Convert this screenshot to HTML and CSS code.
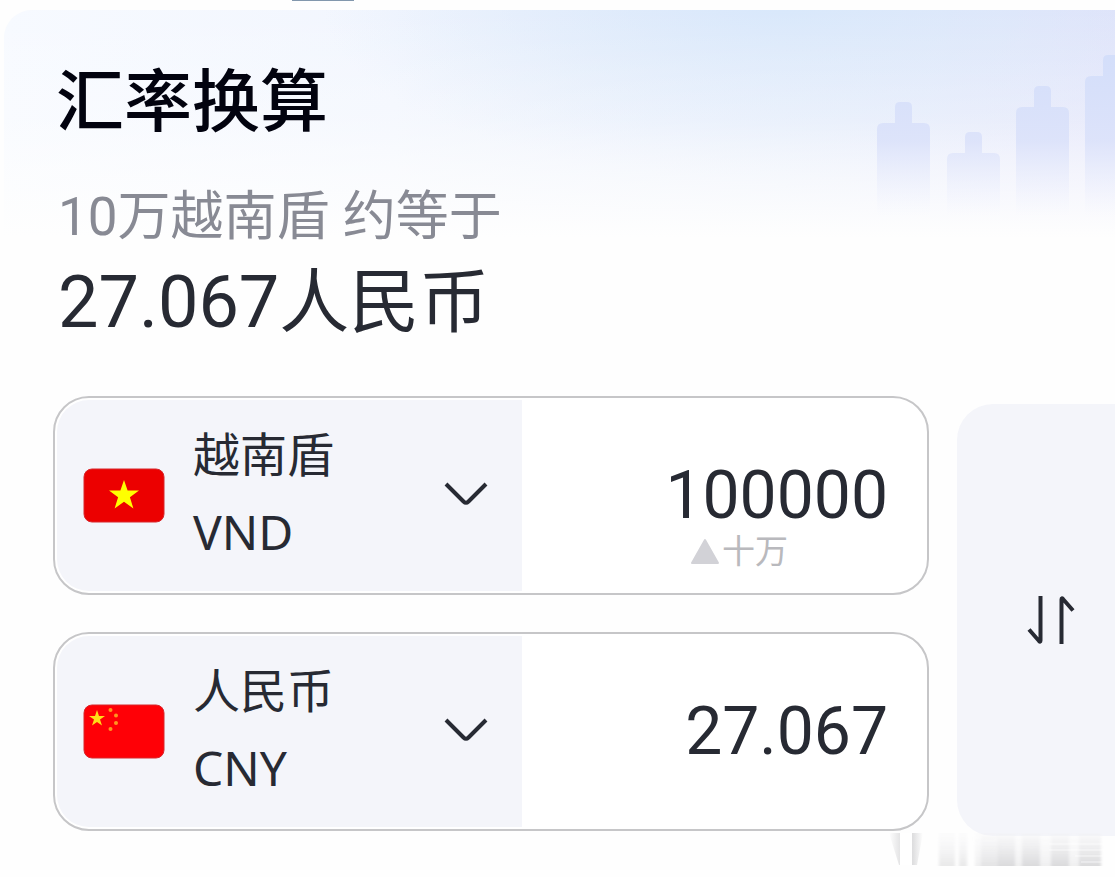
FILE: index.html
```html
<!DOCTYPE html>
<html lang="zh-CN">
<head>
<meta charset="utf-8">
<meta name="viewport" content="width=device-width, initial-scale=1">
<title>汇率换算</title>
<link rel="stylesheet" href="styles.css">
</head>
<body>
<div class="tab-strip"><span class="tab-marker"></span></div>
<main class="card">
  <svg class="candles" width="240" height="220" viewBox="0 0 240 220" aria-hidden="true">
    <defs>
      <linearGradient id="fade" gradientUnits="userSpaceOnUse" x1="0" y1="40" x2="0" y2="206">
        <stop offset="0" stop-color="#d3defa"/>
        <stop offset="0.55" stop-color="#dae1fa" stop-opacity="0.85"/>
        <stop offset="1" stop-color="#eceffd" stop-opacity="0"/>
      </linearGradient>
    </defs>
    <g fill="url(#fade)">
      <path d="M2 210V119q0-6 6-6h12V97q0-5 5-5h7q5 0 5 5v16h12q6 0 6 6v91z"/>
      <path d="M72 210V149q0-6 6-6h12v-16q0-5 5-5h7q5 0 5 5v16h12q6 0 6 6v61z"/>
      <path d="M141 210V103q0-6 6-6h12V81q0-5 5-5h7q5 0 5 5v16h12q6 0 6 6v107z"/>
      <path d="M210 210V72q0-6 6-6h12V50q0-5 5-5h7v165z"/>
    </g>
  </svg>
  <h1 class="title">汇率换算</h1>
  <p class="summary">10万越南盾 约等于</p>
  <p class="result"><span class="figure">27.067</span>人民币</p>

  <form class="converter">
    <div class="rows">
      <div class="row">
        <button class="currency" type="button" aria-haspopup="listbox" aria-label="越南盾 VND">
          <svg class="flag" width="82" height="55" viewBox="0 0 82 55" aria-hidden="true">
            <rect x="1" y="1" width="80" height="53" rx="8" fill="#ec0000" stroke="#d8262b"/>
            <path fill="#ffff00" d="M41 12l3.600 10.500h11.400l-9.100 6.700 3.500 11.300-9.400-6.800-9.400 6.800 3.500-11.300-9.100-6.700h11.400z"/>
          </svg>
          <span class="names"><span class="name">越南盾</span><span class="code">VND</span></span>
          <svg class="chevron" width="44" height="24" viewBox="0 0 44 24" aria-hidden="true"><path d="M2 2l17.500 17.500q2.500 2.500 5 0L42 2"/></svg>
        </button>
        <div class="field">
          <input class="amount" type="text" inputmode="decimal" value="100000" aria-label="越南盾金额">
          <span class="hint"><svg width="30" height="27" viewBox="0 0 30 27" aria-hidden="true"><path d="M15 2L28 25H2z" fill="#d2d2d7" stroke="#d2d2d7" stroke-width="2" stroke-linejoin="round"/></svg>十万</span>
        </div>
      </div>
      <div class="row">
        <button class="currency" type="button" aria-haspopup="listbox" aria-label="人民币 CNY">
          <svg class="flag" width="82" height="55" viewBox="0 0 82 55" aria-hidden="true">
            <rect x="1" y="1" width="80" height="53" rx="8" fill="#ff0006" stroke="#d8262b"/>
            <path fill="#ffde17" d="M14 6l2 6h6l-5 3.600 2 6-5-3.600-5 3.600 2-6L6 12h6z"/>
            <g fill="#ff951f"><circle cx="27.500" cy="6" r="2"/><circle cx="33" cy="11.500" r="2"/><circle cx="33" cy="19" r="2"/><circle cx="27.500" cy="25" r="2"/></g>
          </svg>
          <span class="names"><span class="name">人民币</span><span class="code">CNY</span></span>
          <svg class="chevron" width="44" height="24" viewBox="0 0 44 24" aria-hidden="true"><path d="M2 2l17.500 17.500q2.500 2.500 5 0L42 2"/></svg>
        </button>
        <div class="field">
          <input class="amount" type="text" inputmode="decimal" value="27.067" aria-label="人民币金额">
        </div>
      </div>
    </div>
    <button class="swap" type="button" aria-label="互换货币">
      <svg width="48" height="50" viewBox="0 0 48 50" aria-hidden="true"><path d="M13.500 1v44.500q0 2-1.500.5L2 34.500M34.500 49V4.500q0-2 1.500-.5L46 15.500"/></svg>
    </button>
  </form>
</main>
<svg class="stamp" width="226" height="40" viewBox="0 0 226 40" aria-hidden="true">
  <defs>
    <linearGradient id="veil" x1="0" y1="0" x2="0" y2="1">
      <stop offset="0" stop-color="#f2f2f4" stop-opacity="0.300"/>
      <stop offset="1" stop-color="#dadadc"/>
    </linearGradient>
    <linearGradient id="side" x1="0" y1="0" x2="1" y2="0">
      <stop offset="0" stop-color="#d0d0d2" stop-opacity="0"/>
      <stop offset="0.400" stop-color="#d0d0d2"/>
      <stop offset="0.700" stop-color="#d0d0d2"/>
      <stop offset="1" stop-color="#d0d0d2" stop-opacity="0"/>
    </linearGradient>
    <filter id="soft"><feGaussianBlur stdDeviation="1.500 0.500"/></filter>
  </defs>
  <path d="M0 2h34l-6 32H10z" fill="url(#side)" opacity="0.700"/>
  <g fill="url(#veil)" filter="url(#soft)">
    <path d="M50 2h16v33H50zM70 2h8v33h-8zM92 2h18v33H92z" opacity="0.600"/>
    <path d="M109 2h17v33h-17zM133 2h18v33h-18zM162 2h18v33h-18zM190 2h22v33h-22z"/>
    <path d="M86 2h126v33H86z" opacity="0.400"/>
  </g>
  <path d="M11 2h12v32H11z" fill="#fff"/>
  <path d="M160 13h54M160 19h54M186 25h28M192 31h22" stroke="#fff" stroke-width="1" opacity="0.700"/>
</svg>
</body>
</html>
```
FILE: styles.css
```css
* {
  box-sizing: border-box;
}

body {
  position: relative;
  margin: 0;
  min-height: 100vh;
  overflow: hidden;
  background: #fefefe;
  color: #272a33;
  font-family: Roboto, "Noto Sans CJK SC", sans-serif;
}

button,
input {
  margin: 0;
  border: 0;
  color: inherit;
  font-family: inherit;
}

.tab-strip {
  height: 10px;
  padding-left: 292px;
}

.tab-marker {
  display: block;
  width: 62px;
  height: 1px;
  background: #8297ad;
}

.card {
  position: relative;
  margin-left: 4px;
  padding: 53px 0 40px 52px;
  border-radius: 28px 0 0 0;
  background:
    linear-gradient(180deg, transparent 0, rgba(254, 254, 254, 0.3) 110px, rgba(254, 254, 254, 0.6) 155px, #fefefe 228px),
    radial-gradient(460px 170px at 780px 0, #d9e8fb, transparent),
    linear-gradient(90deg, #f7faff 0, #f2f6fe 35%, #e6edfb 70%, #e1e3fa 100%);
}

.candles {
  position: absolute;
  top: 0;
  right: 0;
}

.title {
  position: relative;
  margin: 0;
  color: #02030f;
  font-size: 68px;
  font-weight: 500;
  line-height: 80px;
}

.summary {
  margin: 42px 0 0;
  padding-left: 2px;
  color: #888a94;
  font-size: 53px;
  line-height: 64px;
}

.result {
  margin: 14px 0 0;
  padding-left: 2px;
  font-size: 70px;
  line-height: 80px;
}

.figure {
  font-size: 72px;
}

.converter {
  display: flex;
  gap: 28px;
  margin: 53px 0 0 -3px;
}

.rows {
  display: grid;
  flex: 1;
  gap: 37px;
  min-width: 0;
}

.row {
  display: flex;
  min-height: 199px;
  padding: 2px;
  border: 2px solid #c6c6c8;
  border-radius: 36px;
  background: #fff;
}

.currency {
  display: flex;
  flex: 0 0 465px;
  align-items: center;
  padding: 0 34px 0 26px;
  border-radius: 32px 0 0 32px;
  background: #f4f5fa;
  text-align: left;
}

.names {
  display: grid;
  flex: 1;
  gap: 12px;
  margin: 0 0 4px 28px;
}

.name {
  font-size: 47px;
  line-height: 64px;
}

.code {
  font-family: "Noto Sans", sans-serif;
  font-size: 48px;
  line-height: 64px;
}

.chevron,
.swap svg {
  fill: none;
  stroke: #272a33;
  stroke-width: 4;
}

.chevron {
  margin-bottom: 4px;
}

.field {
  display: grid;
  flex: 1;
  grid-template-rows: 1fr 72px 1fr;
  min-width: 0;
  padding-right: 37px;
}

.amount {
  grid-row: 2;
  width: 100%;
  padding: 0;
  background: transparent;
  font-size: 66px;
  line-height: 72px;
  text-align: right;
}

.hint {
  display: flex;
  grid-row: 3;
  gap: 2px;
  align-items: center;
  align-self: start;
  justify-content: flex-end;
  padding-right: 100px;
  color: #b9b9bd;
  font-size: 33px;
  line-height: 40px;
}

.swap {
  display: flex;
  flex: 0 0 158px;
  align-items: center;
  justify-content: center;
  margin: 8px 0 -5px;
  padding: 0 0 0 30px;
  border-radius: 36px 0 0 36px;
  background: #f4f5fa;
}

.stamp {
  position: absolute;
  top: 831px;
  right: 0;
}
```
